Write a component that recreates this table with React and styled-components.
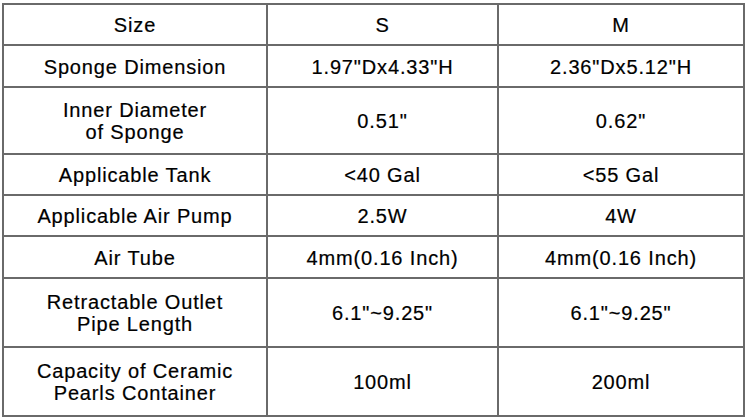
import React from "react";
import styled, { createGlobalStyle } from "styled-components";

const Global = createGlobalStyle`
  html, body { margin: 0; padding: 0; background: #fff; }
  body { font-family: "Liberation Sans", Arial, sans-serif; }
`;

const Page = styled.div`
  width: 749px;
  height: 420px;
  padding: 3px 0 0 2px;
  box-sizing: border-box;
  background: #fff;
`;

const Table = styled.table`
  border-collapse: collapse;
  table-layout: fixed;
  width: 743px;
  color: #000;
  font-family: "Liberation Sans", Arial, sans-serif;
  font-size: 20px;
  letter-spacing: 0.85px;
  -webkit-text-stroke: 0.2px #000;
`;

const Col = styled.col`
  width: ${(p) => p.$w}px;
`;

const Row = styled.tr`
  height: ${(p) => p.$h}px;
`;

const Cell = styled.td`
  border: 2px solid #6a6a6a;
  text-align: center;
  vertical-align: middle;
  padding: 1px 0 0;
  line-height: 22px;
  white-space: nowrap;
`;

const rows = [
  { h: 41, c: ["Size", "S", "M"] },
  { h: 42, c: ["Sponge Dimension", '1.97"Dx4.33"H', '2.36"Dx5.12"H'] },
  { h: 67, c: [["Inner Diameter", "of Sponge"], '0.51"', '0.62"'] },
  { h: 41, c: ["Applicable Tank", "<40 Gal", "<55 Gal"] },
  { h: 41, c: ["Applicable Air Pump", "2.5W", "4W"] },
  { h: 42, c: ["Air Tube", "4mm(0.16 Inch)", "4mm(0.16 Inch)"] },
  { h: 69, c: [["Retractable Outlet", "Pipe Length"], '6.1"~9.25"', '6.1"~9.25"'] },
  { h: 69, c: [["Capacity of Ceramic", "Pearls Container"], "100ml", "200ml"] },
];

const colWidths = [264, 231, 246];

const renderText = (t) =>
  Array.isArray(t) ? (
    <>
      {t[0]}
      <br />
      {t[1]}
    </>
  ) : (
    t
  );

export default function App() {
  return (
    <Page>
      <Global />
      <Table>
        <colgroup>
          {colWidths.map((w, i) => (
            <Col key={i} $w={w} />
          ))}
        </colgroup>
        <tbody>
          {rows.map((r, i) => (
            <Row key={i} $h={r.h}>
              {r.c.map((t, j) => (
                <Cell key={j}>{renderText(t)}</Cell>
              ))}
            </Row>
          ))}
        </tbody>
      </Table>
    </Page>
  );
}
